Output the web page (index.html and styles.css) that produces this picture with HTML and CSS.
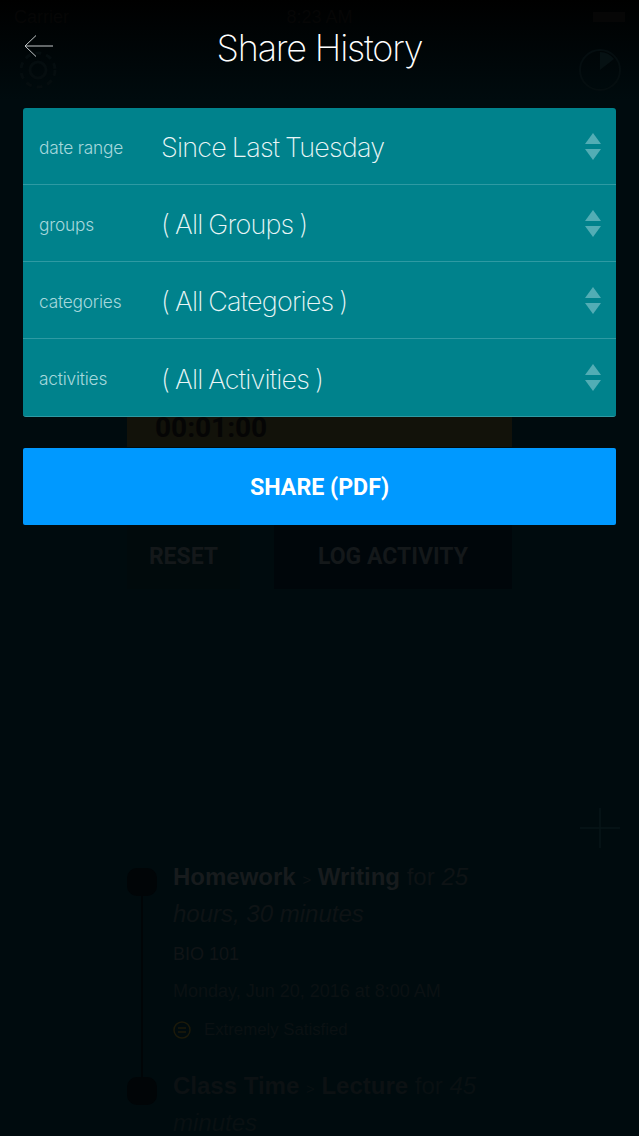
FILE: index.html
```html
<!DOCTYPE html>
<html lang="en">
<head>
<meta charset="UTF-8">
<meta name="viewport" content="width=device-width, initial-scale=1.0">
<title>Share History</title>
<link rel="stylesheet" href="styles.css">
</head>
<body>
<div class="screen">
    <!-- dimmed page behind the sheet -->
    <div class="under">
        <div class="status">
            <span>Carrier</span>
            <span>8:23 AM</span>
            <span class="battery"></span>
        </div>
        <div class="under-icons">
            <svg width="44" height="44" viewBox="0 0 44 44" fill="none" stroke="#050d0f" stroke-width="3">
                <circle cx="22" cy="22" r="8"/>
                <circle cx="22" cy="22" r="17" stroke-dasharray="6 5"/>
            </svg>
            <svg width="44" height="44" viewBox="0 0 44 44" fill="none">
                <circle cx="22" cy="22" r="20" stroke="#050e10" stroke-width="2"/>
                <path d="M22 22V4A18 18 0 0 1 36 11Z" fill="#061113"/>
            </svg>
        </div>
        <div class="timer-box"><span class="timer-text">00:01:00</span></div>
        <div class="under-actions">
            <div class="reset">RESET</div>
            <div class="log">LOG ACTIVITY</div>
        </div>
        <div class="plus-row">
            <svg width="40" height="40" viewBox="0 0 40 40" stroke="#071618" stroke-width="1.5">
                <path d="M20 0V40M0 20H40"/>
            </svg>
        </div>
        <div class="timeline">
            <div class="rail"><span class="dot"></span><span class="line"></span><span class="dot"></span></div>
            <div class="entries">
                <p class="entry-title"><b>Homework</b> <span class="sep">&gt;</span> <b>Writing</b> for <i>25 hours, 30 minutes</i></p>
                <p class="entry-group">BIO 101</p>
                <p class="entry-date">Monday, Jun 20, 2016 at 8:00 AM</p>
                <p class="entry-mood">
                    <svg width="18" height="18" viewBox="0 0 18 18" fill="none" stroke="#1c1a0a" stroke-width="1.5">
                        <circle cx="9" cy="9" r="8"/>
                        <path d="M5 7H13M5 11H13"/>
                    </svg>
                    <span>Extremely Satisfied</span>
                </p>
                <p class="entry-title second"><b>Class Time</b> <span class="sep">&gt;</span> <b>Lecture</b> for <i>45 minutes</i></p>
            </div>
        </div>
    </div>

    <div class="sheet">
        <div class="header">
            <svg class="back" width="32" height="24" viewBox="0 0 32 24" fill="none" stroke="#c4c9ca" stroke-width="1">
                <path d="M30 12H2M13 1.5L2 12L13 22.5"/>
            </svg>
            <h1>Share History</h1>
        </div>
        <div class="filters">
            <div class="filter">
                <span class="label">date range</span>
                <span class="value">Since Last Tuesday</span>
                <span class="arrows"><i class="up"></i><i class="down"></i></span>
            </div>
            <div class="filter">
                <span class="label">groups</span>
                <span class="value">( All Groups )</span>
                <span class="arrows"><i class="up"></i><i class="down"></i></span>
            </div>
            <div class="filter">
                <span class="label">categories</span>
                <span class="value">( All Categories )</span>
                <span class="arrows"><i class="up"></i><i class="down"></i></span>
            </div>
            <div class="filter">
                <span class="label">activities</span>
                <span class="value">( All Activities )</span>
                <span class="arrows"><i class="up"></i><i class="down"></i></span>
            </div>
        </div>
        <button class="share">SHARE (PDF)</button>
    </div>
</div>
</body>
</html>
```
FILE: styles.css
```css
* {
    box-sizing: border-box;
}
html, body {
    margin: 0;
    padding: 0;
}
body {
    background: #000;
}
.screen {
    position: relative;
    width: 639px;
    height: 1136px;
    overflow: hidden;
    background: linear-gradient(#000 0, #000b0e 100px, #000b0e 100%);
    font-family: "Inter", "Liberation Sans", sans-serif;
}

/* page behind */
.status {
    display: grid;
    grid-template-columns: 1fr auto 1fr;
    align-items: center;
    height: 32px;
    padding: 2px 14px 0;
    font-family: "Liberation Sans", sans-serif;
    font-size: 18px;
    color: #060606;
}
.battery {
    justify-self: end;
    width: 32px;
    height: 10px;
    background: #060606;
}
.under-icons {
    display: flex;
    justify-content: space-between;
    padding: 16px 17px 0 16px;
}
.timer-box {
    margin: 288px 127px 0;
    height: 67px;
    padding: 31px 28px 0;
    background: #12120a;
}
.timer-text {
    display: block;
    font-family: "Roboto", sans-serif;
    font-weight: 700;
    font-size: 28px;
    line-height: 34px;
    color: #050505;
}
.under-actions {
    display: flex;
    gap: 34px;
    margin: 77px 127px 0;
    height: 65px;
    font-family: "Roboto", sans-serif;
}
.reset {
    width: 113px;
    text-align: center;
    padding-top: 19px;
    font-weight: 700;
    font-size: 23px;
    color: #14181a;
    background: #010a0c;
}
.log {
    flex: 1;
    text-align: center;
    padding-top: 19px;
    font-weight: 700;
    font-size: 23px;
    color: #14181a;
    background: #00060a;
}
.plus-row {
    display: flex;
    justify-content: flex-end;
    margin-top: 219px;
    padding-right: 19px;
}
.timeline {
    display: flex;
    margin-top: 10px;
    padding-left: 127px;
    font-family: "Liberation Sans", sans-serif;
}
.rail {
    width: 46px;
    padding-top: 10px;
    display: flex;
    flex-direction: column;
    align-items: flex-start;
}
.dot {
    flex: none;
    width: 30px;
    height: 28px;
    border-radius: 10px;
    background: #010507;
}
.line {
    flex: none;
    width: 2px;
    height: 181px;
    margin-left: 14px;
    background: #010507;
}
.entries {
    width: 310px;
}
.entries p {
    margin: 0;
}
.entry-title {
    font-size: 24px;
    line-height: 37px;
    color: #0e1315;
}
.entry-title b {
    color: #171b1d;
}
.sep {
    font-size: 15px;
    line-height: 1;
}
.entry-group {
    margin-top: 11px !important;
    font-size: 18px;
    line-height: 22px;
    color: #101416;
}
.entry-date {
    margin-top: 15px !important;
    font-size: 18px;
    line-height: 22px;
    color: #0b1113;
}
.entry-mood {
    display: flex;
    align-items: center;
    gap: 13px;
    margin-top: 17px !important;
    font-size: 16.8px;
    line-height: 22px;
    color: #0b1113;
}
.second {
    margin-top: 26px !important;
    color: #091012;
}
.second b {
    color: #0c1113;
}

/* the sheet on top */
.sheet {
    position: absolute;
    top: 0;
    left: 0;
    width: 100%;
    padding: 0 23px;
}
.header {
    position: relative;
    height: 108px;
    color: #fff;
    text-align: center;
}
.back {
    position: absolute;
    top: 34px;
    left: 0;
}
h1 {
    margin: 0;
    padding-top: 26px;
    font-size: 36px;
    line-height: 44px;
    font-weight: 200;
    letter-spacing: -1.2px;
}
.filters {
    background: #00828c;
    border-radius: 3px;
    border-bottom: 1px solid #2e9aa3;
}
.filter {
    display: flex;
    align-items: center;
    height: 77px;
    padding: 3px 15px 0 16px;
    border-bottom: 1px solid #2e9aa3;
}
.filter:last-child {
    border-bottom: none;
}
.label {
    width: 123px;
    margin-top: -1px;
    font-size: 17.3px;
    font-weight: 300;
    letter-spacing: -0.2px;
    color: #a6d8dc;
}
.value {
    flex: 1;
    margin-left: -1px;
    font-size: 27px;
    font-weight: 200;
    letter-spacing: -0.8px;
    word-spacing: -1px;
    color: #eaf6f7;
}
.arrows {
    display: flex;
    flex-direction: column;
    gap: 5px;
    margin-top: -3px;
}
.arrows i {
    width: 0;
    height: 0;
    border-left: 8px solid transparent;
    border-right: 8px solid transparent;
}
.up {
    border-bottom: 11px solid #52adb5;
}
.down {
    border-top: 11px solid #52adb5;
}
.share {
    display: block;
    width: 100%;
    height: 77px;
    margin-top: 31px;
    border: none;
    border-radius: 2px;
    background: #0099ff;
    color: #fff;
    font-family: "Roboto", sans-serif;
    font-weight: 700;
    font-size: 23.2px;
}
```
